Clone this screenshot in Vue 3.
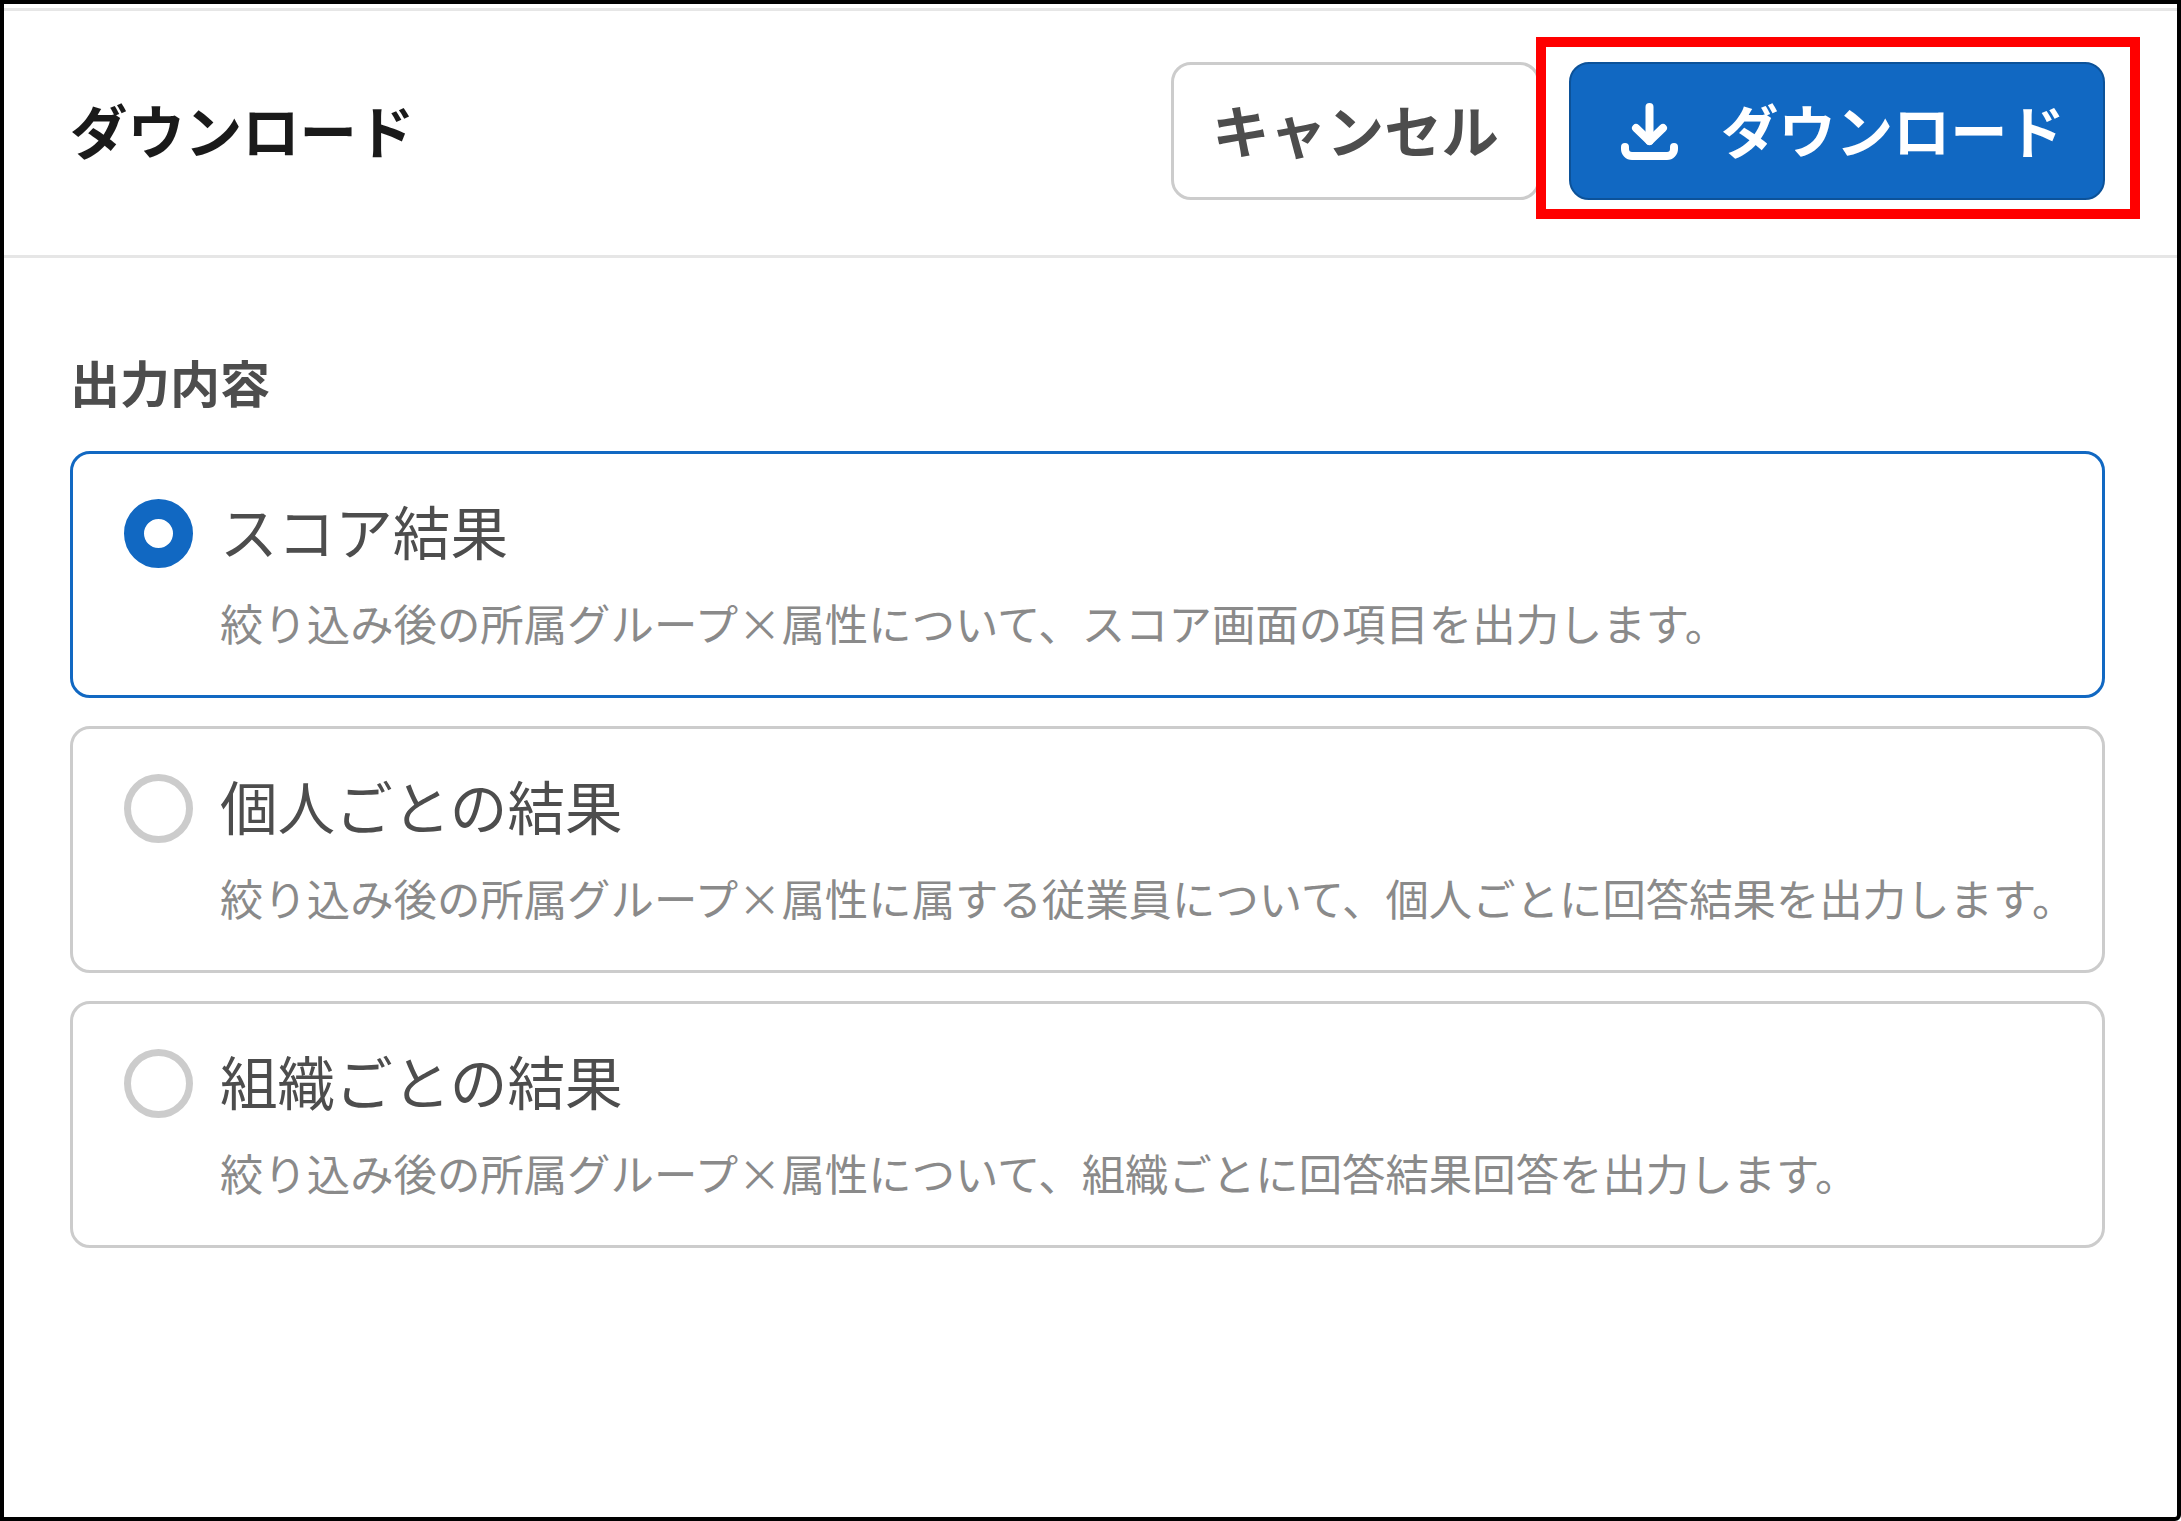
<script setup>
const options = [
  {
    id: 'score',
    title: 'スコア結果',
    desc: '絞り込み後の所属グループ×属性について、スコア画面の項目を出力します。',
  },
  {
    id: 'person',
    title: '個人ごとの結果',
    desc: '絞り込み後の所属グループ×属性に属する従業員について、個人ごとに回答結果を出力します。',
  },
  {
    id: 'org',
    title: '組織ごとの結果',
    desc: '絞り込み後の所属グループ×属性について、組織ごとに回答結果回答を出力します。',
  },
]
const selected = 'score'
</script>

<template>
  <div class="frame">
    <header class="header">
      <h1 class="title">ダウンロード</h1>
      <div class="actions">
        <button type="button" class="btn btn-cancel">キャンセル</button>
        <button type="button" class="btn btn-primary">
          <svg class="btn-icon" viewBox="0 0 57 57" fill="none" stroke="#fff" stroke-width="8" stroke-linecap="round" stroke-linejoin="round">
            <path d="M28.5 4V38" />
            <path d="M15 25L28.5 38L42 25" />
            <path d="M4 44V46a7 7 0 0 0 7 7H46a7 7 0 0 0 7-7V44" />
          </svg>
          ダウンロード
        </button>
      </div>
      <!-- annotation box over the button -->
      <div class="highlight"></div>
    </header>

    <main class="content">
      <h2 class="section-title">出力内容</h2>
      <div class="options">
        <div
          v-for="option in options"
          :key="option.id"
          class="option"
          :class="{ 'is-selected': option.id === selected }"
        >
          <div class="option-head">
            <span class="radio"></span>
            <span class="option-title">{{ option.title }}</span>
          </div>
          <p class="option-desc">{{ option.desc }}</p>
        </div>
      </div>
    </main>
  </div>
</template>

<style>
html,
body {
  margin: 0;
  background: #fff;
}
</style>

<style scoped>
.frame {
  box-sizing: border-box;
  width: 2181px;
  height: 1521px;
  padding-top: 4px;
  border: 4px solid #000;
  border-bottom-right-radius: 6px;
  background: #fff;
  font-family: "Noto Sans CJK JP", "Noto Sans", sans-serif;
}

.header {
  position: relative;
  box-sizing: border-box;
  display: flex;
  align-items: center;
  justify-content: space-between;
  height: 250px;
  padding: 0 72px 4px 66px;
  border-top: 3px solid #e6e6e6;
  border-bottom: 3px solid #e6e6e6;
}

.title {
  margin: 0;
  padding-bottom: 4px;
  font-size: 57.4px;
  font-weight: 700;
  line-height: 1.2;
  color: #1a1a1a;
}

.actions {
  display: flex;
  gap: 29px;
}

.btn {
  box-sizing: border-box;
  display: flex;
  align-items: center;
  justify-content: center;
  height: 138px;
  padding: 0 0 6px;
  border-radius: 20px;
  font-family: inherit;
  font-size: 57.3px;
  font-weight: 700;
}

.btn-cancel {
  width: 369px;
  border: 3px solid #ccc;
  background: #fff;
  color: #4d4d4d;
}

.btn-primary {
  gap: 43px;
  width: 536px;
  padding-left: 12px;
  border: 2px solid #0c5299;
  background: #1168c2;
  color: #fff;
}

.btn-icon {
  width: 57px;
  height: 57px;
  margin-top: 7px;
}

.highlight {
  position: absolute;
  top: 26px;
  right: 37px;
  box-sizing: border-box;
  width: 604px;
  height: 182px;
  border: 10px solid #f00;
  pointer-events: none;
}

.content {
  padding: 93px 72px 0 66px;
}

.section-title {
  margin: 0 0 40px;
  font-size: 50px;
  font-weight: 700;
  line-height: 60px;
  color: #4d4d4d;
}

.options {
  display: flex;
  flex-direction: column;
  gap: 28px;
}

.option {
  box-sizing: border-box;
  height: 247px;
  padding: 45px 51px 0;
  border: 3px solid #ccc;
  border-radius: 20px;
}

.option.is-selected {
  border-color: #1168c2;
}

.option-head {
  display: flex;
  align-items: center;
  gap: 27px;
}

.radio {
  box-sizing: border-box;
  flex: none;
  width: 69px;
  height: 69px;
  border: 7px solid #ccc;
  border-radius: 50%;
}

.is-selected .radio {
  border: 20px solid #1168c2;
}

.option-title {
  padding-bottom: 6px;
  font-size: 57.6px;
  line-height: 63px;
  color: #4d4d4d;
}

.option-desc {
  margin: 24px 0 0 96px;
  font-size: 43.4px;
  line-height: 60px;
  white-space: nowrap;
  color: #8a8a8a;
}
</style>
